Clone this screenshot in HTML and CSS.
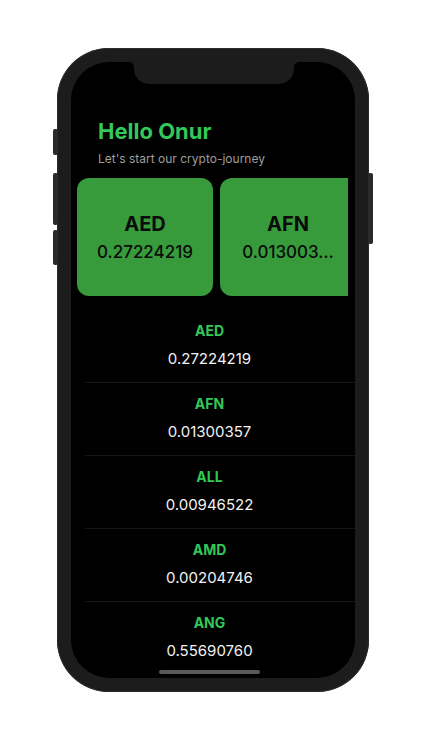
FILE: index.html
```html
<!DOCTYPE html>
<html lang="en">
<head>
<meta charset="utf-8">
<title>Crypto</title>
<link rel="stylesheet" href="styles.css">
</head>
<body>
<div class="stage">
  <div class="phone">
    <span class="btn btn-silent"></span>
    <span class="btn btn-vol-up"></span>
    <span class="btn btn-vol-down"></span>
    <span class="btn btn-power"></span>
    <div class="screen">
      <div class="notch"></div>
      <header class="header">
        <h1 class="title">Hello Onur</h1>
        <p class="subtitle">Let's start our crypto-journey</p>
      </header>
      <div class="cards">
        <div class="card">
          <div class="card-code">AED</div>
          <div class="card-rate">0.27224219</div>
        </div>
        <div class="card card-partial">
          <div class="card-code">AFN</div>
          <div class="card-rate">0.013003…</div>
        </div>
      </div>
      <ul class="list">
        <li class="row"><span class="row-code">AED</span><span class="row-rate">0.27224219</span></li>
        <li class="row"><span class="row-code">AFN</span><span class="row-rate">0.01300357</span></li>
        <li class="row"><span class="row-code">ALL</span><span class="row-rate">0.00946522</span></li>
        <li class="row"><span class="row-code">AMD</span><span class="row-rate">0.00204746</span></li>
        <li class="row"><span class="row-code">ANG</span><span class="row-rate">0.55690760</span></li>
      </ul>
      <div class="home-area"><div class="home-indicator"></div></div>
    </div>
  </div>
</div>
</body>
</html>
```

FILE: styles.css
```css
* { box-sizing: border-box; }
html, body { margin: 0; padding: 0; background: #ffffff; }
body { font-family: Inter, "Noto Sans", "Liberation Sans", sans-serif; }

.stage {
  padding: 48px 0 0 57px;
}

.phone {
  position: relative;
  width: 312px;
  height: 644px;
  padding: 14px;
  border-radius: 52px;
  background: #1c1c1c;
  box-shadow: inset 0 0 0 1px #2c2c2c;
}

.btn {
  position: absolute;
  width: 5px;
  background: #2a2a2a;
  border-radius: 2px;
}
.btn-silent { left: -4px; top: 81px; height: 26px; }
.btn-vol-up { left: -4px; top: 125px; height: 52px; }
.btn-vol-down { left: -4px; top: 182px; height: 35px; }
.btn-power { right: -4px; top: 125px; height: 71px; }

.screen {
  position: relative;
  width: 284px;
  height: 616px;
  border-radius: 38px;
  background: #000;
  overflow: hidden;
  display: flex;
  flex-direction: column;
  padding-top: 56px;
}

.notch {
  position: absolute;
  top: 0;
  left: 63px;
  width: 160px;
  height: 22px;
  background: #1c1c1c;
  border-radius: 0 0 15px 15px;
}
.notch::before,
.notch::after {
  content: "";
  position: absolute;
  top: 0;
  width: 6px;
  height: 6px;
}
.notch::before {
  left: -6px;
  background: radial-gradient(circle at 0 100%, transparent 6px, #1c1c1c 6.5px);
}
.notch::after {
  right: -6px;
  background: radial-gradient(circle at 100% 100%, transparent 6px, #1c1c1c 6.5px);
}

.header {
  padding-left: 27px;
}
.title {
  margin: 0;
  font-size: 22px;
  line-height: 26px;
  font-weight: 700;
  color: #34c759;
}
.subtitle {
  margin: 7px 0 0;
  font-size: 12px;
  line-height: 16px;
  color: #9d9d9d;
}

.cards {
  display: flex;
  gap: 7px;
  margin: 11px 7px 0 6px;
  overflow: hidden;
  flex: 0 0 auto;
}
.card {
  flex: 0 0 136px;
  height: 118px;
  border-radius: 12px;
  background: #379b3b;
  display: flex;
  flex-direction: column;
  align-items: center;
  justify-content: center;
  gap: 6px;
  color: #0b0b0b;
}
.card-partial {
  flex-basis: 129px;
  border-radius: 12px 0 0 12px;
  padding-left: 7px;
}
.card-code {
  font-size: 20px;
  line-height: 24px;
  font-weight: 700;
}
.card-rate {
  font-size: 17px;
  line-height: 20px;
  font-weight: 500;
  white-space: nowrap;
}

.list {
  list-style: none;
  margin: 14px 0 0;
  padding: 0;
  flex: 1 1 auto;
  min-height: 0;
  overflow: hidden;
}
.row {
  margin-left: 14px;
  padding: 12px 21px 13px 0;
  border-bottom: 1px solid #161616;
  display: flex;
  flex-direction: column;
  align-items: center;
  gap: 9px;
}
.row-code {
  font-size: 14px;
  line-height: 18px;
  font-weight: 700;
  color: #34c759;
}
.row-rate {
  font-size: 15px;
  line-height: 20px;
  color: #f2f2f2;
}

.home-area {
  flex: 0 0 19px;
  display: flex;
  justify-content: center;
  padding-top: 11px;
  padding-right: 7px;
}
.home-indicator {
  width: 101px;
  height: 4px;
  border-radius: 2px;
  background: #5a5a5a;
}
```
